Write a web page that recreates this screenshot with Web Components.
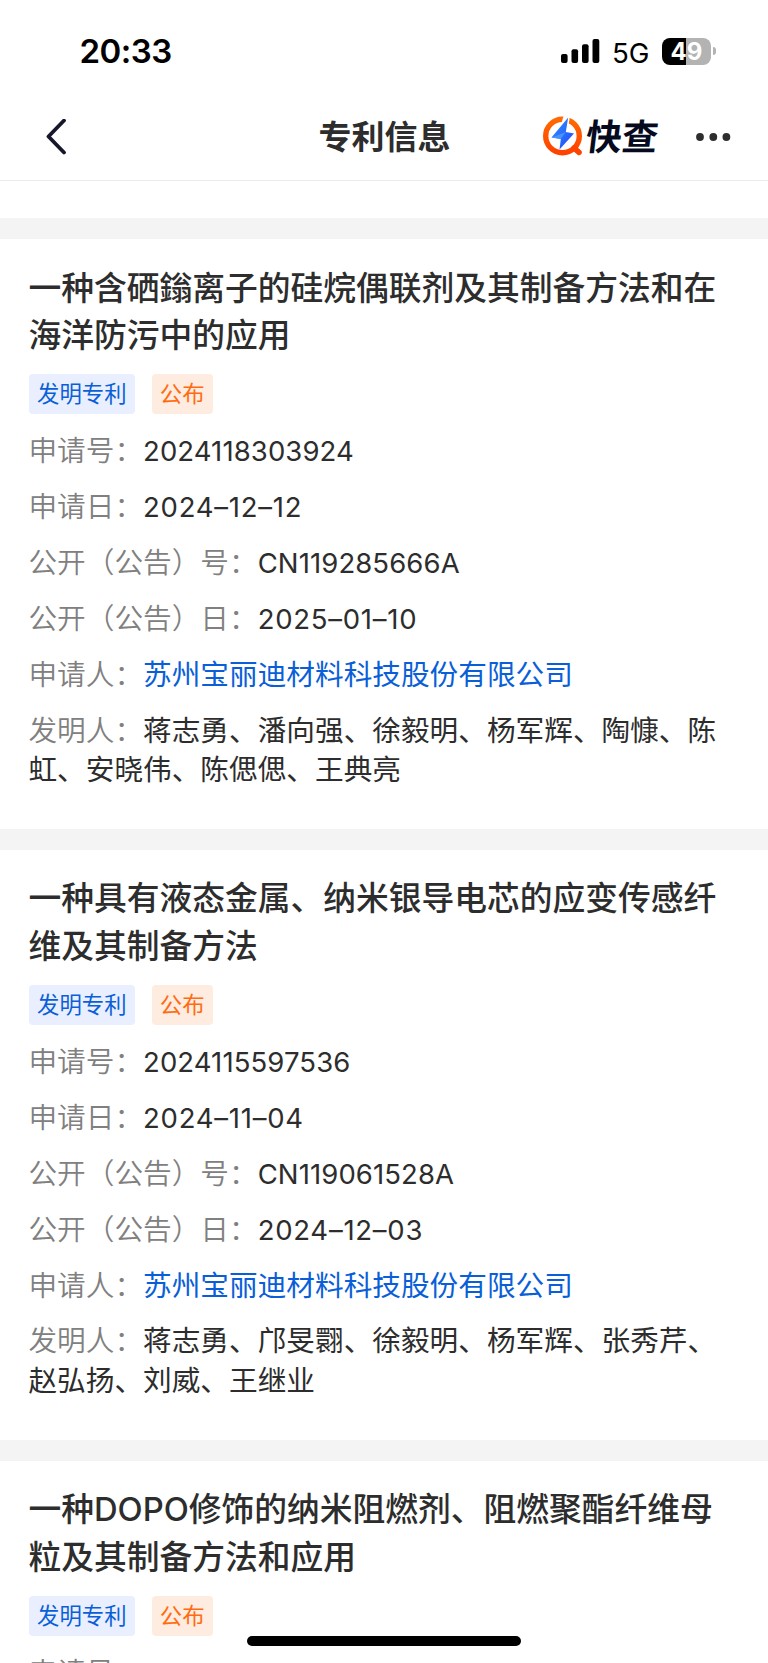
<!DOCTYPE html>
<html lang="zh-CN">
<head>
<meta charset="UTF-8">
<meta name="viewport" content="width=device-width, initial-scale=1.0">
<title>专利信息</title>
<style>
    html, body {
        margin: 0;
        height: 100%;
        overflow: hidden;
        background: #fff;
    }

    body {
        font-family: Inter, "Noto Sans CJK SC", sans-serif;
        color: #2d2d2d;
    }
</style>
</head>
<body>

<status-bar time="20:33" network="5G" battery="49"></status-bar>
<nav-bar>专利信息</nav-bar>

<patent-list>
    <patent-card>
        <span slot="title">一种含硒鎓离子的硅烷偶联剂及其制备方法和在海洋防污中的应用</span>
        <patent-tag slot="tags">发明专利</patent-tag>
        <patent-tag slot="tags" kind="orange">公布</patent-tag>
        <info-row label="申请号：" type="code">2024118303924</info-row>
        <info-row label="申请日：" type="date">2024–12–12</info-row>
        <info-row label="公开（公告）号：" type="code">CN119285666A</info-row>
        <info-row label="公开（公告）日：" type="date">2025–01–10</info-row>
        <info-row label="申请人：" type="link">苏州宝丽迪材料科技股份有限公司</info-row>
        <info-row label="发明人：">蒋志勇、潘向强、徐毅明、杨军辉、陶慷、陈虹、安晓伟、陈偲偲、王典亮</info-row>
    </patent-card>

    <patent-card>
        <span slot="title">一种具有液态金属、纳米银导电芯的应变传感纤维及其制备方法</span>
        <patent-tag slot="tags">发明专利</patent-tag>
        <patent-tag slot="tags" kind="orange">公布</patent-tag>
        <info-row label="申请号：" type="code">2024115597536</info-row>
        <info-row label="申请日：" type="date">2024–11–04</info-row>
        <info-row label="公开（公告）号：" type="code">CN119061528A</info-row>
        <info-row label="公开（公告）日：" type="date">2024–12–03</info-row>
        <info-row label="申请人：" type="link">苏州宝丽迪材料科技股份有限公司</info-row>
        <info-row label="发明人：">蒋志勇、邝旻翾、徐毅明、杨军辉、张秀芹、赵弘扬、刘威、王继业</info-row>
    </patent-card>

    <patent-card>
        <span slot="title">一种DOPO修饰的纳米阻燃剂、阻燃聚酯纤维母粒及其制备方法和应用</span>
        <patent-tag slot="tags">发明专利</patent-tag>
        <patent-tag slot="tags" kind="orange">公布</patent-tag>
        <info-row label="申请号：" type="code"></info-row>
    </patent-card>
</patent-list>

<home-indicator></home-indicator>

<script>
///////////////////////
///// Status bar /////
//////////////////////

class StatusBar extends HTMLElement {

    constructor() {
        super();

        this.attachShadow({ mode: 'open' });
        this.shadowRoot.innerHTML = `
            <style>
                :host {
                    display: flex;
                    align-items: center;
                    box-sizing: border-box;
                    height: 102px;
                    padding: 0 52px 0 79.5px;
                    color: #000;
                }

                .time {
                    flex: 1;
                    font-size: 33px;
                    font-weight: 600;
                    letter-spacing: -.5px;
                }

                .signal {
                    margin-right: 12px;
                }

                .network {
                    width: 50px;
                    font-size: 27.7px;
                    padding-top: 3px;
                }

                .battery {
                    display: flex;
                    align-items: center;
                }

                .level {
                    width: 49px;
                    height: 27px;
                    border-radius: 8px;
                    background: linear-gradient(90deg, #000 50%, #b3b3b3 50%);
                    color: #fff;
                    font-size: 24px;
                    font-weight: 700;
                    line-height: 28px;
                    text-align: center;
                }

                .nub {
                    width: 3px;
                    height: 8px;
                    margin-left: 2px;
                    border-radius: 0 4px 4px 0;
                    background: #b3b3b3;
                }
            </style>

            <div class="time">${this.getAttribute('time')}</div>
            <svg class="signal" width="39" height="24" viewBox="0 0 39 24">
                <rect x="0" y="15" width="6.6" height="9" rx="2"/>
                <rect x="10.5" y="10.3" width="6.6" height="13.7" rx="2"/>
                <rect x="21" y="5.3" width="6.6" height="18.7" rx="2"/>
                <rect x="31.5" y="0" width="6.8" height="24" rx="2"/>
            </svg>
            <div class="network">${this.getAttribute('network')}</div>
            <div class="battery">
                <div class="level">${this.getAttribute('battery')}</div>
                <div class="nub"></div>
            </div>
        `;
    }
}

window.customElements.define('status-bar', StatusBar);

///////////////////////
/////// Nav bar //////
//////////////////////

class NavBar extends HTMLElement {

    constructor() {
        super();

        this.attachShadow({ mode: 'open' });
        this.shadowRoot.innerHTML = `
            <style>
                :host {
                    display: grid;
                    grid-template-columns: 1fr auto 1fr;
                    align-items: center;
                    box-sizing: border-box;
                    height: 79px;
                    padding: 0 37.5px 8px 44.5px;
                    border-bottom: 1px solid #ebebeb;
                }

                h1 {
                    margin: 0;
                    font-size: 33px;
                    font-weight: 600;
                    line-height: 48px;
                    transform: translateX(-3px);
                }

                svg {
                    display: block;
                }

                .right {
                    display: flex;
                    align-items: center;
                    justify-content: flex-end;
                }

                .logo {
                    margin-bottom: 2px;
                }

                .brand {
                    margin: 0 36px 0 3.5px;
                    font-size: 36px;
                    font-weight: 700;
                    line-height: 40px;
                    color: #050a1e;
                    transform: skewX(-7deg);
                }
            </style>

            <svg width="22" height="36" viewBox="0 0 22 36">
                <path d="M19 1.5 3.5 17.5 19 33.5" fill="none" stroke="#17172b" stroke-width="3.8" stroke-linecap="round" stroke-linejoin="round"/>
            </svg>
            <h1><slot></slot></h1>
            <div class="right">
                <svg class="logo" width="40" height="40" viewBox="0 0 40 40">
                    <defs>
                        <linearGradient id="ring" x1="0" y1="0" x2="0" y2="1">
                            <stop offset="0" stop-color="#ff6a00"/>
                            <stop offset="1" stop-color="#ff4200"/>
                        </linearGradient>
                        <linearGradient id="bolt" x1="0" y1="0" x2="1" y2="1">
                            <stop offset="0" stop-color="#2f93ff"/>
                            <stop offset="1" stop-color="#2448f5"/>
                        </linearGradient>
                    </defs>
                    <circle cx="19.5" cy="20" r="16.8" fill="none" stroke="url(#ring)" stroke-width="5.4"/>
                    <path d="M31 32 36 36.4" stroke="#ff4400" stroke-width="5.6" stroke-linecap="round"/>
                    <path d="M20.5 0 27 0 25.5 9 18 9Z" fill="#fff"/>
                    <path d="M25.2 1.5 8.5 21.5 17.8 23 16.5 33.5 31 17.5 22.8 16Z" fill="url(#bolt)"/>
                    <path d="M8.5 21.5 22.8 16 17.8 23Z" fill="#4d9bff" opacity=".8"/>
                </svg>
                <div class="brand">快查</div>
                <svg width="36" height="10" viewBox="0 0 36 10" fill="#2e2e2e">
                    <circle cx="5" cy="5" r="3.9"/>
                    <circle cx="18.3" cy="5" r="3.9"/>
                    <circle cx="31.4" cy="5" r="3.9"/>
                </svg>
            </div>
        `;
    }
}

window.customElements.define('nav-bar', NavBar);

///////////////////////
///// Patent list ////
//////////////////////

class PatentList extends HTMLElement {

    constructor() {
        super();

        this.attachShadow({ mode: 'open' });
        this.shadowRoot.innerHTML = `
            <style>
                :host {
                    display: block;
                    padding-top: 37px;
                }
            </style>
            <slot></slot>
        `;
    }
}

window.customElements.define('patent-list', PatentList);

///////////////////////
///// Patent card ////
//////////////////////

const cardTemplate = document.createElement('template');
cardTemplate.innerHTML = `
    <style>
        :host {
            display: block;
            padding: 25.6px 29px 39.4px;
            border-top: 21px solid #f4f4f4;
        }

        h2 {
            margin: 0 0 0 -.6px;
            font-size: 32.76px;
            font-weight: 500;
            line-height: 47.3px;
        }

        .tags {
            display: flex;
            gap: 16.7px;
            margin: 15px 0 16.6px;
        }

        .rows {
            display: flex;
            flex-direction: column;
            gap: 16.5px;
            margin-left: -.6px;
        }
    </style>

    <h2><slot name="title"></slot></h2>
    <div class="tags"><slot name="tags"></slot></div>
    <div class="rows"><slot></slot></div>
`;

class PatentCard extends HTMLElement {

    constructor() {
        super();

        this.attachShadow({ mode: 'open' });
        this.shadowRoot.appendChild(cardTemplate.content.cloneNode(true));
    }
}

window.customElements.define('patent-card', PatentCard);

///////////////////////
///////// Tag ////////
//////////////////////

class PatentTag extends HTMLElement {

    constructor() {
        super();

        this.attachShadow({ mode: 'open' });
        this.shadowRoot.innerHTML = `
            <style>
                :host {
                    display: block;
                    padding: 0 8.6px 0 8px;
                    border-radius: 4px;
                    background: #e9effe;
                    color: #0a5fd8;
                    font-size: 22.4px;
                    line-height: 40.3px;
                }

                :host([kind="orange"]) {
                    background: #ffece1;
                    color: #ff6b10;
                }
            </style>
            <slot></slot>
        `;
    }
}

window.customElements.define('patent-tag', PatentTag);

///////////////////////
////// Info row //////
//////////////////////

class InfoRow extends HTMLElement {

    constructor() {
        super();

        this.attachShadow({ mode: 'open' });
        this.shadowRoot.innerHTML = `
            <style>
                :host {
                    display: block;
                    font-size: 28.67px;
                    line-height: 39.4px;
                }

                /* short inline boxes, so that only the host sets the row height */
                .label,
                .value {
                    line-height: 1;
                }

                .label {
                    color: #808080;
                    font-weight: 350;
                }

                :host([type="link"]) .value {
                    color: #0a5fd8;
                }

                :host([type="code"]) .value,
                :host([type="date"]) .value {
                    font-size: 27.5px;
                    font-weight: 370;
                    letter-spacing: .1px;
                }

                :host([type="date"]) .value {
                    letter-spacing: .75px;
                }
            </style>
            <span class="label">${this.getAttribute('label')}</span><span class="value"><slot></slot></span>
        `;
    }
}

window.customElements.define('info-row', InfoRow);

///////////////////////
/// Home indicator ///
//////////////////////

class HomeIndicator extends HTMLElement {

    constructor() {
        super();

        this.attachShadow({ mode: 'open' });
        this.shadowRoot.innerHTML = `
            <style>
                :host {
                    position: fixed;
                    bottom: 17px;
                    left: 50%;
                    width: 274px;
                    height: 10px;
                    border-radius: 5px;
                    background: #000;
                    transform: translateX(-50%);
                }
            </style>
        `;
    }
}

window.customElements.define('home-indicator', HomeIndicator);
</script>
</body>
</html>
